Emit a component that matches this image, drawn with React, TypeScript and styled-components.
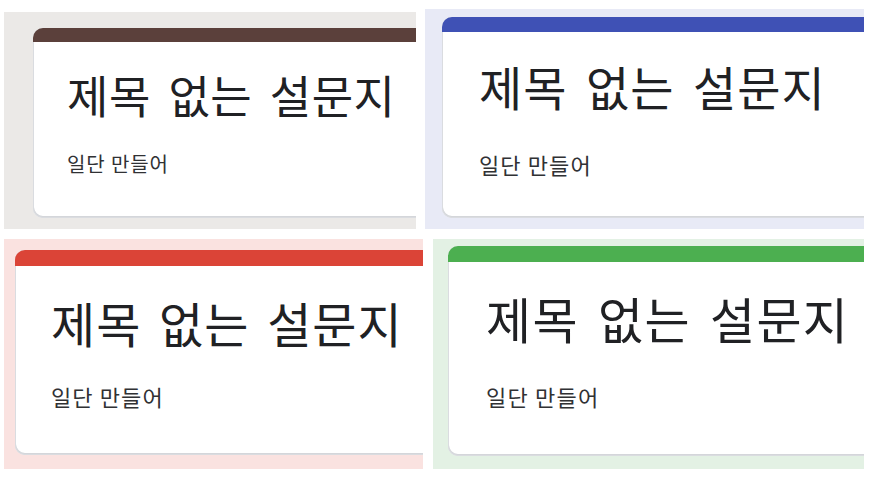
import React from "react";
import styled, { createGlobalStyle } from "styled-components";

const GlobalStyle = createGlobalStyle`
  html, body {
    margin: 0;
    padding: 0;
    background: #ffffff;
  }
  body {
    font-family: "Noto Sans CJK KR", "Noto Sans", sans-serif;
  }
`;

const Page = styled.div`
  display: flex;
  flex-direction: column;
  gap: 10px;
  padding: 9px 0 0 4px;
  width: 879px;
  height: 481px;
  box-sizing: border-box;
  overflow: hidden;
`;

const Row = styled.div<{ $gap: number }>`
  display: flex;
  align-items: flex-end;
  gap: ${(p) => p.$gap}px;
`;

const Panel = styled.div<{
  $bg: string;
  $w: number;
  $h: number;
  $top: number;
  $left: number;
}>`
  display: flex;
  align-items: flex-start;
  box-sizing: border-box;
  width: ${(p) => p.$w}px;
  height: ${(p) => p.$h}px;
  padding: ${(p) => p.$top}px 0 0 ${(p) => p.$left}px;
  background: ${(p) => p.$bg};
  overflow: hidden;
`;

const Card = styled.div<{ $h: number }>`
  flex-shrink: 0;
  display: flex;
  flex-direction: column;
  width: 760px;
  height: ${(p) => p.$h}px;
  background: #ffffff;
  border-radius: 10px;
  overflow: hidden;
  box-shadow: inset 0 0 0 1px #dadce0, inset 0 -1px 0 1px #d4d6da;
`;

const Bar = styled.div<{ $color: string; $h: number }>`
  flex-shrink: 0;
  height: ${(p) => p.$h}px;
  background: ${(p) => p.$color};
`;

const Body = styled.div<{ $top: number; $left: number; $gap: number }>`
  display: flex;
  flex-direction: column;
  gap: ${(p) => p.$gap}px;
  padding: ${(p) => p.$top}px 0 0 ${(p) => p.$left}px;
`;

const Title = styled.div<{ $size: number; $ls: number; $ws: number }>`
  font-size: ${(p) => p.$size}px;
  line-height: 1;
  letter-spacing: ${(p) => p.$ls}px;
  word-spacing: ${(p) => p.$ws}px;
  color: #202124;
  font-weight: 400;
  white-space: nowrap;
`;

const Subtitle = styled.div<{ $size: number; $ls: number }>`
  font-size: ${(p) => p.$size}px;
  line-height: 1;
  letter-spacing: ${(p) => p.$ls}px;
  color: #303134;
  white-space: nowrap;
`;

type PanelSpec = {
  bg: string;
  bar: string;
  w: number;
  h: number;
  top: number;
  left: number;
  cardH: number;
  barH: number;
  bodyTop: number;
  bodyLeft: number;
  gap: number;
  titleSize: number;
  titleLs: number;
  ws: number;
  subSize: number;
  subLs: number;
};

const rows: { gap: number; panels: PanelSpec[] }[] = [
  {
    gap: 9,
    panels: [
      {
        bg: "#ebe9e7",
        bar: "#5b403b",
        w: 412,
        h: 217,
        top: 16,
        left: 29,
        cardH: 190,
        barH: 14,
        bodyTop: 30,
        bodyLeft: 34,
        gap: 37,
        titleSize: 45,
        titleLs: 0.5,
        ws: 7,
        subSize: 20,
        subLs: 0.9,
      },
      {
        bg: "#e8eaf6",
        bar: "#3f51b5",
        w: 439,
        h: 220,
        top: 8,
        left: 17,
        cardH: 201,
        barH: 15,
        bodyTop: 30,
        bodyLeft: 37,
        gap: 44,
        titleSize: 47,
        titleLs: 1,
        ws: 7,
        subSize: 22,
        subLs: 1.1,
      },
    ],
  },
  {
    gap: 10,
    panels: [
      {
        bg: "#fae2e0",
        bar: "#db4437",
        w: 419,
        h: 230,
        top: 11,
        left: 11,
        cardH: 205,
        barH: 16,
        bodyTop: 32,
        bodyLeft: 36,
        gap: 39,
        titleSize: 48,
        titleLs: 1,
        ws: 6,
        subSize: 22,
        subLs: 1.1,
      },
      {
        bg: "#e3f1e4",
        bar: "#4caf50",
        w: 431,
        h: 230,
        top: 7,
        left: 15,
        cardH: 210,
        barH: 16,
        bodyTop: 31,
        bodyLeft: 38,
        gap: 43,
        titleSize: 49,
        titleLs: 1.3,
        ws: 7,
        subSize: 22,
        subLs: 1.2,
      },
    ],
  },
];

export default function App() {
  return (
    <>
      <GlobalStyle />
      <Page>
        {rows.map((row, ri) => (
          <Row key={ri} $gap={row.gap}>
            {row.panels.map((p, pi) => (
              <Panel
                key={pi}
                $bg={p.bg}
                $w={p.w}
                $h={p.h}
                $top={p.top}
                $left={p.left}
              >
                <Card $h={p.cardH}>
                  <Bar $color={p.bar} $h={p.barH} />
                  <Body $top={p.bodyTop} $left={p.bodyLeft} $gap={p.gap}>
                    <Title $size={p.titleSize} $ls={p.titleLs} $ws={p.ws}>
                      제목 없는 설문지
                    </Title>
                    <Subtitle $size={p.subSize} $ls={p.subLs}>
                      일단 만들어
                    </Subtitle>
                  </Body>
                </Card>
              </Panel>
            ))}
          </Row>
        ))}
      </Page>
    </>
  );
}
